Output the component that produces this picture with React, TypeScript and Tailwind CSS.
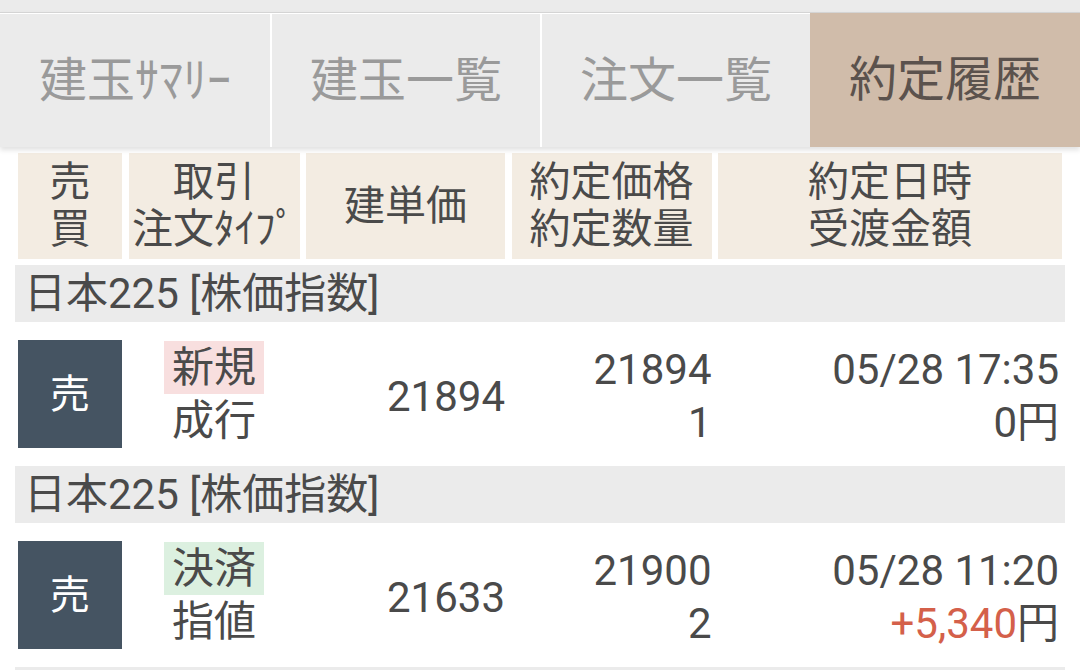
const tabs = [
  { label: "建玉ｻﾏﾘｰ", active: false },
  { label: "建玉一覧", active: false },
  { label: "注文一覧", active: false },
  { label: "約定履歴", active: true },
];

const trades = [
  {
    side: "売",
    kind: "新規",
    kindBg: "bg-[#f8dfdf]",
    type: "成行",
    entry: "21894",
    price: "21894",
    qty: "1",
    date: "05/28 17:35",
    amount: "0",
    amountColor: "text-[#4a4a4a]",
  },
  {
    side: "売",
    kind: "決済",
    kindBg: "bg-[#dcf0e0]",
    type: "指値",
    entry: "21633",
    price: "21900",
    qty: "2",
    date: "05/28 11:20",
    amount: "+5,340",
    amountColor: "text-[#d4604a]",
  },
];

const cols = "grid grid-cols-[104px_171px_199px_200px_344px] gap-x-[6.5px]";

export default function App() {
  return (
    <div className="w-[1080px] h-[670px] overflow-hidden bg-white text-[#4a4a4a] font-['Roboto','Noto_Sans_CJK_JP',sans-serif]">
      {/* tabs */}
      <div className="bg-[#ebebeb] pt-3">
        <div className="relative z-10 flex h-[135px] border-t border-[#d4d4d4] shadow-[0_3px_5px_rgba(0,0,0,0.12)]">
          {tabs.map((t, i) => (
            <div
              key={t.label}
              className={
                t.active
                  ? "w-[270px] flex items-center justify-center bg-[#d0bcaa] text-[#5b524d] text-[48px]"
                  : `w-[270px] flex items-center justify-center bg-[#ebebeb] border-t border-white text-[#9a9a9a] text-[48px] ${
                      i > 0 ? "border-l-2" : ""
                    }`
              }
            >
              {t.label}
            </div>
          ))}
        </div>
      </div>

      <div className="px-[15px]">
        {/* column heads */}
        <div className={`${cols} mt-[6px] mb-[6px] pl-[3px] text-[41px] leading-[47px] text-center`}>
          <div className="h-[106px] bg-[#f3ece2] flex flex-col justify-center">
            <span>売</span>
            <span>買</span>
          </div>
          <div className="h-[106px] bg-[#f3ece2] flex flex-col justify-center">
            <span>取引</span>
            <span>注文ﾀｲﾌﾟ</span>
          </div>
          <div className="h-[106px] bg-[#f3ece2] flex flex-col justify-center">
            <span>建単価</span>
          </div>
          <div className="h-[106px] bg-[#f3ece2] flex flex-col justify-center">
            <span>約定価格</span>
            <span>約定数量</span>
          </div>
          <div className="h-[106px] bg-[#f3ece2] flex flex-col justify-center">
            <span>約定日時</span>
            <span>受渡金額</span>
          </div>
        </div>

        {trades.map((t, i) => (
          <div key={i}>
            <div className="h-[57px] bg-[#ebebeb] pl-[9px] text-[42px] leading-[57px]">
              日本225 [株価指数]
            </div>
            <div className={`${cols} pl-[3px] h-[144px] items-center text-[42px] leading-[53px]`}>
              <div className="h-[108px] bg-[#455462] text-white text-[40px] flex items-center justify-center">
                {t.side}
              </div>
              <div className="flex flex-col items-center">
                <span className={`${t.kindBg} px-[8px]`}>{t.kind}</span>
                <span>{t.type}</span>
              </div>
              <div className="text-right pt-[4px]">{t.entry}</div>
              <div className="flex flex-col items-end pt-[4px]">
                <span>{t.price}</span>
                <span>{t.qty}</span>
              </div>
              <div className="flex flex-col items-end pr-[3px] pt-[4px]">
                <span>{t.date}</span>
                <span>
                  <span className={t.amountColor}>{t.amount}</span>円
                </span>
              </div>
            </div>
          </div>
        ))}
        <div className="h-[10px] bg-[#ebebeb]" />
      </div>
    </div>
  );
}
